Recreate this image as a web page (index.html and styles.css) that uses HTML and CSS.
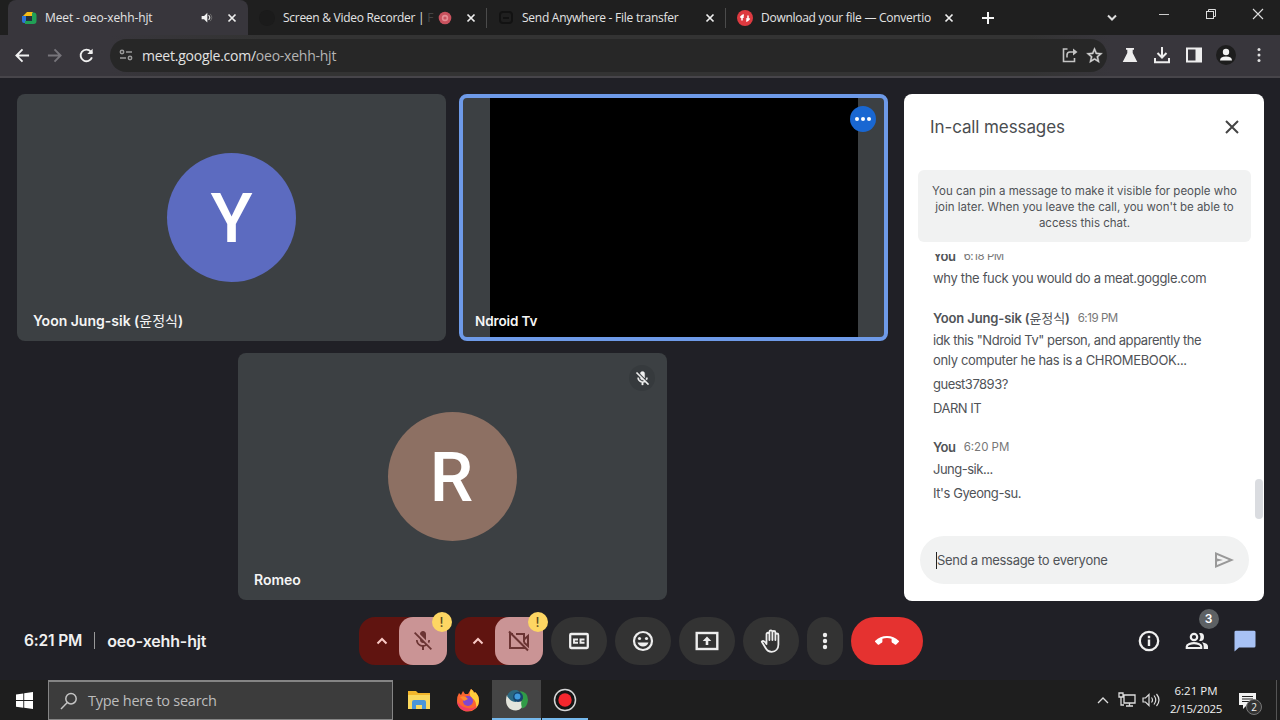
FILE: index.html
```html
<!DOCTYPE html>
<html lang="en">
<head>
<meta charset="utf-8">
<title>Meet - oeo-xehh-hjt</title>
<link rel="stylesheet" href="styles.css">
</head>
<body>
<header class="tabstrip">
  <div class="tab tab-active">
    <svg class="fav" viewBox="0 0 16 16"><path d="M2 6l4-4h6v4H2z" fill="#f6bd16"/><path d="M1 6h4v7H3a2 2 0 0 1-2-2z" fill="#2d74d8"/><path d="M11 2.500h1.500a3 3 0 0 1 3 3v5.500a3 3 0 0 1-3 3H4v-3h7z" fill="#21a056"/><path d="M5 6h6v5H5z" fill="#24303c"/></svg>
    <span class="tab-title t1">Meet - oeo-xehh-hjt</span>
    <svg class="speaker" viewBox="0 0 16 16" fill="#f2f2f2"><path d="M2 6h3l4-4v12L5 10H2z"/><path d="M10.500 5q3 3 0 6" fill="none" stroke="#ddd" stroke-width="1.500"/><path d="M12.500 3.500q4 4.500 0 9" fill="none" stroke="#777" stroke-width="1"/></svg>
    <svg class="tabx" viewBox="0 0 10 10"><path d="M1.500 1.500l7 7M8.500 1.500l-7 7"/></svg>
  </div>
  <div class="tab tab2">
    <span class="fav fav-dark"></span>
    <span class="tab-title t2">Screen &amp; Video Recorder | <i class="fade">F</i></span>
    <svg class="rec" viewBox="0 0 14 14"><circle cx="7" cy="7" r="6.300" fill="#c9525e"/><circle cx="7" cy="7" r="3.200" fill="#e58d94"/><circle cx="7" cy="7" r="1.600" fill="#c9525e"/></svg>
    <svg class="tabx" viewBox="0 0 10 10"><path d="M1.500 1.500l7 7M8.500 1.500l-7 7"/></svg>
  </div>
  <div class="tab tab3">
    <svg class="fav" viewBox="0 0 16 16" fill="none" stroke="#121212" stroke-width="2"><rect x="2" y="2" width="12" height="11" rx="3"/><path d="M5 8h6"/></svg>
    <span class="tab-title t3">Send Anywhere - File transfer</span>
    <svg class="tabx" viewBox="0 0 10 10"><path d="M1.500 1.500l7 7M8.500 1.500l-7 7"/></svg>
  </div>
  <div class="tab tab4">
    <svg class="fav" viewBox="0 0 16 16"><circle cx="8" cy="8" r="8" fill="#dd3a40"/><path d="M5 10.500V6.500q0-1.500 2-1.500M3.300 7.500L5 5.800l1.700 1.700M11 5.500v4q0 1.500-2 1.500M12.700 8.500L11 10.200 9.300 8.500" fill="none" stroke="#fff" stroke-width="1.500"/></svg>
    <span class="tab-title t4">Download your file — Convertio</span>
    <svg class="tabx" viewBox="0 0 10 10"><path d="M1.500 1.500l7 7M8.500 1.500l-7 7"/></svg>
  </div>
  <svg class="newtab" viewBox="0 0 12 12"><path d="M6 0v12M0 6h12" stroke="#f5f5f5" stroke-width="2"/></svg>
  <div class="winctl">
    <svg width="12" height="12" viewBox="0 0 12 12"><path d="M2 4.500l4 4 4-4" fill="none" stroke="#ddd" stroke-width="2"/></svg>
    <svg width="12" height="12" viewBox="0 0 12 12"><path d="M1 6.500h10" stroke="#ccc"/></svg>
    <svg width="12" height="12" viewBox="0 0 12 12" fill="none" stroke="#ddd"><rect x="1.500" y="3.500" width="7" height="7"/><path d="M3.500 3.500v-2h7v7h-2"/></svg>
    <svg width="12" height="12" viewBox="0 0 12 12"><path d="M1 1l10 10M11 1L1 11" stroke="#ddd" stroke-width="1.100"/></svg>
  </div>
</header>
<nav class="toolbar">
  <svg class="nav" viewBox="0 0 16 16"><path d="M15 8H2M8 1.500L1.500 8 8 14.500"/></svg>
  <svg class="nav nav-dim" viewBox="0 0 16 16"><path d="M1 8h13M8 1.500L14.500 8 8 14.500"/></svg>
  <svg class="nav" viewBox="0 0 16 16"><path d="M13.800 10A6.200 6.200 0 1 1 12.600 3.800L14 5.200"/><path d="M14.500.8v5.700H8.800z" fill="#f1f1f1" stroke="none"/></svg>
  <div class="omnibox">
    <svg class="site" viewBox="0 0 14 12" fill="none" stroke="#999" stroke-width="1.500"><circle cx="3" cy="3" r="1.700"/><path d="M7 3h6M1 9h6"/><circle cx="11" cy="9" r="1.700"/></svg>
    <span class="url">meet.google.com/<i class="path">oeo-xehh-hjt</i></span>
    <svg class="share" viewBox="0 0 16 16" fill="none" stroke="#c4c4c4" stroke-width="1.600"><path d="M5.500 2H1.500v12.500h11V11"/><path d="M5 10.500V8q0-3 3-3h5"/><path d="M11 1.500L15.500 5 11 8.500z" fill="#c4c4c4" stroke="none"/></svg>
    <svg class="star" viewBox="0 0 24 24" fill="#d2d2d2" stroke="#d2d2d2" stroke-width=".5"><path d="M22 9.240l-7.190-.62L12 2 9.190 8.630 2 9.240l5.460 4.730L5.820 21 12 17.270 18.180 21l-1.630-7.030L22 9.240zM12 15.400l-3.760 2.270 1-4.280-3.320-2.880 4.380-.38L12 6.100l1.710 4.040 4.380.38-3.320 2.880 1 4.280L12 15.400z"/></svg>
  </div>
  <div class="ext">
    <svg width="16" height="16" viewBox="0 0 16 16" fill="#eee"><path d="M4 1h8v1.800h-1.300V6L15.300 15H.7L5.300 6V2.800H4z"/></svg>
    <svg width="18" height="18" viewBox="0 0 18 18" fill="none" stroke="#eee" stroke-width="2"><path d="M9 1v10M4.500 7L9 11.500 13.500 7M2 12v4.200h14V12"/></svg>
    <svg width="16" height="16" viewBox="0 0 16 16"><path d="M1 1.500h14v13H1z" fill="none" stroke="#eee" stroke-width="2"/><path d="M9.500 1H15v14H9.500z" fill="#eee"/></svg>
    <svg width="20" height="20" viewBox="0 0 20 20"><circle cx="10" cy="10" r="10" fill="#1d1d1d"/><circle cx="10" cy="7" r="3.200" fill="#f3f3f3"/><path d="M4 15.500q0-4 6-4t6 4z" fill="#f3f3f3"/></svg>
    <svg width="16" height="16" viewBox="0 0 16 16" fill="#e2e2e2"><circle cx="8" cy="2.600" r="1.500"/><circle cx="8" cy="8" r="1.500"/><circle cx="8" cy="13.400" r="1.500"/></svg>
  </div>
</nav>
<main class="meet">
  <div class="stage">
    <section class="tiles">
      <div class="tile"><div class="avatar blue">Y</div><span class="name n1">Yoon Jung-sik (<i class="hangul">윤정식</i>)</span></div>
      <div class="tile speaking"><div class="video"></div><span class="name n2">Ndroid Tv</span><span class="more-dot"><b></b><b></b><b></b></span></div>
      <div class="tile"><div class="avatar brown">R</div><span class="name n3">Romeo</span>
        <span class="muted"><svg width="17" height="17" viewBox="0 0 24 24" fill="#f0f0f0" stroke="#f0f0f0" stroke-width=".6"><path d="M19 11h-1.700c0 .74-.16 1.430-.43 2.050l1.230 1.230c.56-.98.9-2.090.9-3.280zm-4.020.17c0-.06.02-.11.02-.17V5c0-1.660-1.340-3-3-3S9 3.340 9 5v.18l5.980 5.990zM4.270 3L3 4.270l6.010 6.010V11c0 1.660 1.330 3 2.990 3 .22 0 .44-.03.65-.08l1.660 1.660c-.71.33-1.500.52-2.310.52-2.760 0-5.300-2.100-5.300-5.100H5c0 3.410 2.720 6.230 6 6.720V21h2v-3.280c.91-.13 1.770-.45 2.540-.9L19.730 21 21 19.730 4.270 3z"/></svg></span></div>
    </section>
    <aside class="chat">
      <div class="chat-head"><h1>In-call messages</h1><svg width="14" height="14" viewBox="0 0 14 14"><path d="M1 1l12 12M13 1L1 13" stroke="#444" stroke-width="2"/></svg></div>
      <div class="notice"><span>You can pin a message to make it visible for people who</span><span>join later. When you leave the call, you won't be able to</span><span>access this chat.</span></div>
      <div class="log">
        <div class="group"><div class="who"><b class="w1">You</b><span class="time tight">6:18 PM</span></div><p><span class="m1">why the fuck you would do a meat.goggle.com</span></p></div>
        <div class="group"><div class="who"><b class="w2">Yoon Jung-sik (<i class="hangul">윤정식</i>)</b><span class="time tight">6:19 PM</span></div><p><span class="m2">idk this "Ndroid Tv" person, and apparently the</span><br><span class="m3">only computer he has is a CHROMEBOOK...</span></p><p><span class="m4">guest37893?</span></p><p><span class="m5">DARN IT</span></p></div>
        <div class="group last"><div class="who"><b class="w1">You</b><span class="time">6:20 PM</span></div><p><span class="m6">Jung-sik...</span></p><p><span class="m7">It's Gyeong-su.</span></p></div>
        <i class="thumb"></i>
      </div>
      <div class="compose"><i class="caret"></i><span class="ph">Send a message to everyone</span><svg width="24" height="24" viewBox="0 0 24 24" fill="#999"><path d="M3 20V4l19 8-19 8zm2-3l11.850-5L5 7v3.500l6 1.500-6 1.500V17z"/></svg></div>
    </aside>
  </div>
  <footer class="controls">
    <div class="meta"><span class="clock">6:21 PM</span><i></i><span class="code">oeo-xehh-hjt</span></div>
    <div class="buttons">
      <div class="split"><svg class="chev" viewBox="0 0 12 8"><path d="M1.500 6.500L6 2l4.500 4.500"/></svg><div class="pink"><svg width="24" height="24" viewBox="0 0 24 24" fill="#6b3433"><path d="M19 11h-1.700c0 .74-.16 1.430-.43 2.050l1.230 1.230c.56-.98.9-2.090.9-3.280zm-4.020.17c0-.06.02-.11.02-.17V5c0-1.660-1.340-3-3-3S9 3.340 9 5v.18l5.980 5.990zM4.270 3L3 4.270l6.010 6.010V11c0 1.660 1.330 3 2.990 3 .22 0 .44-.03.65-.08l1.660 1.660c-.71.33-1.500.52-2.310.52-2.760 0-5.300-2.100-5.300-5.100H5c0 3.410 2.720 6.230 6 6.720V21h2v-3.280c.91-.13 1.770-.45 2.540-.9L19.730 21 21 19.730 4.270 3z"/></svg><em>!</em></div></div>
      <div class="split"><svg class="chev" viewBox="0 0 12 8"><path d="M1.500 6.500L6 2l4.500 4.500"/></svg><div class="pink"><svg width="24" height="24" viewBox="0 0 24 24" fill="none" stroke="#6b3433" stroke-width="2"><path d="M6 5H3v14h14v-2M9 5h8v8.500M17 10.500l4-3.500v10l-4-3.500M2 2.500L21 21.500"/></svg><em>!</em></div></div>
      <div class="btn"><svg width="24" height="24" viewBox="0 0 24 24" fill="none" stroke="#eee" stroke-width="2.300"><rect x="3.200" y="5" width="17.600" height="14" rx="1"/><path d="M11 10.500H7v3.200h4M17.500 10.500h-4v3.200h4" stroke-width="1.900"/></svg></div>
      <div class="btn"><svg width="24" height="24" viewBox="0 0 24 24"><circle cx="12" cy="12" r="9" fill="none" stroke="#eee" stroke-width="2.200"/><circle cx="8.500" cy="9.500" r="1.600" fill="#eee"/><circle cx="15.500" cy="9.500" r="1.600" fill="#eee"/><path d="M6.500 13.500h11q-1.500 4-5.500 4t-5.500-4z" fill="#eee"/></svg></div>
      <div class="btn"><svg width="24" height="24" viewBox="0 0 24 24"><rect x="1.700" y="4" width="20.600" height="16" fill="none" stroke="#eee" stroke-width="2.400"/><path d="M12 7.500l4.300 4.500h-3v4h-2.600v-4h-3z" fill="#eee"/></svg></div>
      <div class="btn"><svg width="24" height="24" viewBox="0 0 24 24" fill="none" stroke="#eee" stroke-width="1.800" stroke-linejoin="round" stroke-linecap="round"><path d="M7.500 14V5.200a1.400 1.400 0 0 1 2.900 0V11M10.400 11V2.900a1.400 1.400 0 0 1 3 0V11M13.400 11V3.500a1.400 1.400 0 0 1 3 0V11M16.400 11V6a1.400 1.400 0 0 1 3 0v9.500c0 4.300-2.800 7.300-6.700 7.300-3 0-4.700-1.200-6.100-3.800L2.800 12.700c1.300-1.500 2.900-.6 4.700 2.300"/></svg></div>
      <div class="btn narrow"><svg width="24" height="24" viewBox="0 0 24 24" fill="#eee"><circle cx="12" cy="6" r="2.200"/><circle cx="12" cy="12" r="2.200"/><circle cx="12" cy="18" r="2.200"/></svg></div>
      <div class="btn end"><svg width="24" height="24" viewBox="0 0 24 24" fill="#fff"><path d="M12 9c-1.600 0-3.150.25-4.600.72v3.100c0 .39-.23.74-.56.9-.98.49-1.870 1.120-2.660 1.850-.18.18-.43.28-.7.28-.28 0-.53-.11-.71-.29L.29 13.080c-.18-.17-.29-.42-.29-.7 0-.28.11-.53.29-.71C3.340 8.780 7.460 7 12 7s8.660 1.780 11.710 4.670c.18.18.29.43.29.71 0 .28-.11.53-.29.71l-2.480 2.480c-.18.18-.43.29-.71.29-.27 0-.52-.11-.7-.28-.79-.74-1.690-1.360-2.670-1.850-.33-.16-.56-.5-.56-.9v-3.100C15.150 9.250 13.600 9 12 9z"/></svg></div>
    </div>
    <div class="side">
      <svg width="24" height="24" viewBox="0 0 24 24"><circle cx="12" cy="12" r="9.200" fill="none" stroke="#f0f0f0" stroke-width="2.300"/><path d="M10.800 10.500h2.400v6.500h-2.400zM10.800 6.800h2.400v2.400h-2.400z" fill="#f0f0f0"/></svg>
      <div class="people"><svg width="24" height="24" viewBox="0 0 24 24"><g fill="none" stroke="#f0f0f0" stroke-width="2.200"><circle cx="9" cy="8" r="3.200"/><path d="M1.800 19v-1.500c0-2 4.500-3.300 7.200-3.300s7.200 1.300 7.200 3.300V19z"/></g><path d="M14 4.300q5-1 5 3.700t-5 3.800q3-3.700 0-7.500zM17 13.200q6 1 6 4.300V20h-4.300v-2.500q0-2.500-1.700-4.300z" fill="#f0f0f0"/></svg><em>3</em></div>
      <svg width="24" height="24" viewBox="0 0 24 24"><path d="M1.500 3q0-1.300 1.500-1.300h18q1.500 0 1.500 1.300v14q0 1.500-1.500 1.500H6l-4.500 4z" fill="#a8c2f5"/></svg>
    </div>
  </footer>
</main>
<footer class="taskbar">
  <div class="start"><svg width="17" height="17" viewBox="0 0 17 17" fill="#fff"><path d="M0 2.400l7.300-1v6.700H0zM8.200 1.200L17 0v8.100H8.200zM0 9h7.300v6.700L0 14.700zM8.200 9H17v8l-8.800-1.200z"/></svg></div>
  <div class="search"><svg width="18" height="18" viewBox="0 0 18 18" fill="none" stroke="#c4c4c4" stroke-width="1.500"><circle cx="11" cy="6.700" r="5.200"/><path d="M7.300 10.500L1 17"/></svg><span>Type here to search</span></div>
  <div class="apps">
    <div class="app"><svg width="24" height="24" viewBox="0 0 24 24"><path d="M1 3h8l2 2h12v16H1z" fill="#f3b62b"/><path d="M1 7h22v14H1z" fill="#fbd95e"/><path d="M5 21v-7q0-2 2-2h10q2 0 2 2v7h-4v-4H9v4z" fill="#4b95d8"/></svg></div>
    <div class="app"><svg width="24" height="24" viewBox="0 0 24 24"><path d="M3 5l2 2 2-4 2 3h3l3-5q3 2 3 4l1-1q4 3 4 9a11 10.500 0 0 1-22 0Q1 8 3 5z" fill="#fb6430"/><path d="M15 1q3 2 3 4l1-1q4 3 4 9 0 4-3 7 1-7-4-10-4-3-1-9z" fill="#ffcd3b"/><path d="M1 13q1 8 8 9.800 8 1 12-5-5 4-11 2Q4 18 1 13z" fill="#f23d64"/><circle cx="12" cy="13" r="5" fill="#8147cf"/><path d="M4 9q5-2 8 2l-4 2q-2-2-4-4z" fill="#ff8c2d"/></svg></div>
    <div class="app app-on"><svg width="24" height="24" viewBox="0 0 24 24"><path d="M2 7q8 8 17 6-1 9-8 9.500Q1 22 1 12q0-3 1-5z" fill="#e3e5dc"/><path d="M2 8Q5 1 12 2l4 3-5 9q-5 0-9-6z" fill="#2c6880"/><path d="M15 3q8 1 8 9-.5 7-6 8.500-2-7 1-10z" fill="#319b47"/><circle cx="13" cy="9" r="5" fill="#16456f"/><circle cx="12.500" cy="8.500" r="3" fill="#3f9ade"/></svg></div>
    <div class="app app-run"><svg width="24" height="24" viewBox="0 0 24 24"><circle cx="12" cy="12" r="10.500" fill="#151515" stroke="#d5d5d5" stroke-width="1.500"/><circle cx="12" cy="12" r="6.700" fill="#f5272e"/></svg></div>
  </div>
  <div class="tray">
    <svg width="12" height="8" viewBox="0 0 12 8"><path d="M1 7l5-5 5 5" fill="none" stroke="#ddd" stroke-width="1.300"/></svg>
    <svg width="18" height="16" viewBox="0 0 18 16" fill="none" stroke="#ddd" stroke-width="1.300"><path d="M6 3h11v8H6zM11.500 11v3M8 14h7M1 1h4v4H1zM3 5v8h3"/></svg>
    <svg width="18" height="16" viewBox="0 0 18 16" fill="none" stroke="#ddd" stroke-width="1.200"><path d="M1 6h2.500L7 2.500v11L3.500 10H1zM9.500 5.500q2 2.500 0 5M12 3.500q3.500 4.500 0 9M14.500 2q5 6 0 12"/></svg>
    <div class="datetime"><span class="tt">6:21 PM</span><span class="dd">2/15/2025</span></div>
    <div class="notif"><svg width="17" height="17" viewBox="0 0 17 17"><path d="M0 1h17v12H8l-4 4v-4H0z" fill="#f2f2f2"/><path d="M3 4.500h11M3 7h11M3 9.500h7" stroke="#222" stroke-width="1"/></svg><em>2</em></div>
  </div>
  <i class="peek"></i>
</footer>
</body>
</html>
```
FILE: styles.css
```css
* { box-sizing: border-box; }
body { margin: 0; width: 1280px; height: 720px; overflow: hidden; display: flex; flex-direction: column; background: #202026; font-family: Inter, "Noto Sans CJK KR", sans-serif; }
svg { flex: none; display: block; }
i, em { font-style: normal; }
span, b { white-space: nowrap; }

.tabstrip { height: 35px; flex: none; background: #1f1f1f; display: flex; align-items: center; font-family: "Open Sans", sans-serif; font-size: 12px; color: #e4e4e4; padding-left: 8px; }
.tab { display: flex; align-items: center; height: 35px; position: relative; }
.tab-active { width: 240px; background: #38363c; border-radius: 8px 8px 0 0; padding-left: 13px; }
.tab2 { width: 239px; padding-left: 11px; border-right: 1px solid #4b4b4b; height: 20px; }
.tab3 { width: 239px; padding-left: 11px; border-right: 1px solid #4b4b4b; height: 20px; }
.tab4 { width: 240px; padding-left: 11px; }
.fav { width: 16px; height: 16px; margin-right: 8px; flex: none; }
.fav-dark { border-radius: 8px; background: #1b1b1b; }
.tab-title { line-height: 20px; }
.t1 { letter-spacing: -0.130px; }
.t2 { letter-spacing: -0.280px; }
.t3 { letter-spacing: -0.260px; }
.t4 { letter-spacing: -0.270px; }
.fade { color: #444; }
.tabx { width: 10px; height: 10px; position: absolute; right: 11px; fill: none; stroke: #eee; stroke-width: 1.700; }
.tab2 .tabx, .tab3 .tabx { right: 10px; }
.tab4 .tabx { right: 12px; }
.speaker { width: 13px; height: 13px; position: absolute; right: 35px; }
.rec { width: 14px; height: 14px; position: absolute; right: 34px; }
.newtab { width: 12px; height: 12px; margin-left: 16px; }
.winctl { margin-left: auto; display: flex; gap: 35px; padding-right: 16px; padding-bottom: 4px; }
.winctl svg:first-child { margin-top: 3px; margin-right: 5px; }

.toolbar { height: 43px; flex: none; display: flex; align-items: center; background: linear-gradient(90deg, #38363c 110px, #333 260px, #333 1030px, #38363c 1110px); border-bottom: 2px solid #47454a; padding: 0 0 1px 15px; }
.nav { width: 15px; height: 15px; margin-right: 17px; fill: none; stroke: #f1f1f1; stroke-width: 2; }
.nav-dim { stroke: #77757b; }
.omnibox { width: 997px; height: 33px; border-radius: 17px; background: #272727; display: flex; align-items: center; padding: 0 3px 0 9px; margin-left: -1px; }
.site { width: 14px; height: 12px; margin-right: 9px; }
.url { font-family: "Open Sans", sans-serif; font-size: 14px; letter-spacing: -0.240px; color: #e2e2e2; }
.path { color: #b5b5b5; }
.share { width: 16px; height: 16px; margin-left: auto; margin-right: 7px; }
.star { width: 19px; height: 19px; }
.ext { display: flex; flex: 1; align-items: center; justify-content: space-between; padding: 0 13px 0 15px; }

.meet { height: 602px; flex: none; background: #202026; }
.stage { height: 522px; padding: 16px 16px 0 17px; display: flex; justify-content: space-between; }
.tiles { width: 871px; display: flex; flex-wrap: wrap; justify-content: center; align-content: flex-start; gap: 12px 13px; }
.tile { width: 429px; height: 247px; border-radius: 8px; background: #3c4043; position: relative; display: flex; align-items: center; justify-content: center; }
.speaking { border: 4px solid #6e9ae8; }
.avatar { width: 129px; height: 129px; border-radius: 50%; color: #fff; font: 500 69px/132px Roboto, sans-serif; text-align: center; }
.blue { background: #5c6bc0; }
.brown { background: #8d7063; padding-right: 2px; }
.name { position: absolute; left: 16px; bottom: 10px; font-size: 14px; line-height: 20px; font-weight: 600; color: #f5f5f5; }
.hangul { font-weight: 400; }
.n2 { font-size: 13.500px; letter-spacing: -0.100px; }
.speaking .name { left: 12px; bottom: 6px; }
.video { width: 368px; height: 239px; background: #000; }
.more-dot { position: absolute; right: 8px; top: 8px; width: 26px; height: 26px; border-radius: 50%; background: #1967d2; display: flex; align-items: center; justify-content: center; gap: 2px; }
.more-dot b { width: 4px; height: 4px; border-radius: 50%; background: #fff; }
.muted { position: absolute; right: 12px; top: 12px; width: 26px; height: 26px; border-radius: 50%; background: #363a3d; display: flex; align-items: center; justify-content: center; }

.chat { width: 360px; height: 507px; border-radius: 8px; background: #fff; color: #505357; display: flex; flex-direction: column; }
.chat-head { height: 76px; flex: none; display: flex; justify-content: space-between; padding: 21px 25px 0 26px; }
.chat-head svg { margin-top: 5px; }
h1 { margin: 0; font-size: 17px; line-height: 24px; font-weight: 400; letter-spacing: -0.100px; color: #4a4d50; white-space: nowrap; }
.notice { width: 333px; height: 72px; margin-left: 14px; flex: none; background: #f1f2f2; border-radius: 6px; display: flex; flex-direction: column; align-items: center; padding-top: 13px; font-size: 11.500px; line-height: 16px; }
.log { margin-top: 12px; height: 265px; flex: none; overflow: hidden; position: relative; display: flex; flex-direction: column; justify-content: flex-end; gap: 20px; padding: 0 29px 16px; font-size: 13px; line-height: 20px; letter-spacing: -0.330px; }
.last { margin-top: -1px; }
.who { display: flex; align-items: center; gap: 8px; height: 20px; margin-bottom: 2px; font-size: 13px; }
.who b { font-weight: 600; }
.w1 { letter-spacing: -0.400px; }
.w2 { letter-spacing: -0.150px; }
.time { font-size: 11.500px; letter-spacing: 0; color: #777; }
.tight { letter-spacing: -0.450px; }
.m2, .m7 { letter-spacing: -0.430px; }
.m4, .m5, .m6 { letter-spacing: -0.500px; }
p { margin: 0 0 4px; white-space: nowrap; }
p:last-child { margin: 0; }
.thumb { position: absolute; right: 1px; top: 225px; width: 8px; height: 40px; border-radius: 4px; background: #dadce0; }
.compose { margin: 17px 0 0 16px; width: 329px; height: 48px; border-radius: 24px; background: #f1f2f2; display: flex; align-items: center; padding: 0 13px 0 16px; font-size: 13px; letter-spacing: -0.290px; }
.caret { width: 1px; height: 17px; background: #222; }
.ph { padding-bottom: 1px; }
.compose svg { margin-left: auto; }

.controls { height: 80px; display: grid; grid-template-columns: 358.500px 564px 1fr; padding-top: 16.500px; }
.controls > div { height: 48px; align-items: center; display: flex; }
.meta { padding-left: 24px; font-size: 15.500px; letter-spacing: -0.150px; font-weight: 600; color: #f0f0f0; }
.code { font-size: 16px; }
.meta i { width: 1px; height: 17px; background: #999; margin: 0 12px 0 12px; }
.buttons { gap: 8px; }
.split { width: 88px; height: 48px; border-radius: 16px; background: #601410; display: flex; align-items: center; }
.chev { width: 12px; height: 8px; margin: 0 11px 0 17px; fill: none; stroke: #f9c9c5; stroke-width: 2; }
.pink { width: 48px; height: 48px; border-radius: 14px; background: #ca9495; position: relative; display: flex; align-items: center; justify-content: center; }
.pink em { position: absolute; right: -5px; top: -5px; width: 20px; height: 20px; border-radius: 50%; background: #fdd663; color: #5a4a1c; font-size: 13px; line-height: 20px; text-align: center; font-weight: 500; }
.btn { width: 56px; height: 48px; border-radius: 24px; background: #333333; display: flex; align-items: center; justify-content: center; }
.narrow { width: 36px; border-radius: 18px; }
.end { width: 72px; background: #e53230; }
.side { justify-content: flex-end; gap: 24px; padding-right: 23.500px; }
.people { position: relative; }
.people em { position: absolute; left: 14px; top: -20px; width: 20px; height: 20px; border-radius: 50%; background: #5d6164; color: #fff; font-size: 12px; line-height: 20px; text-align: center; font-weight: 600; }

.taskbar { height: 40px; flex: none; background: #1e1e1e; display: flex; font-family: "Open Sans", sans-serif; color: #f0f0f0; }
.start { width: 48px; display: flex; align-items: center; justify-content: center; }
.search { width: 345px; background: #3c3c3c; border: 1px solid #858585; border-width: 2px 1px 1px; display: flex; align-items: center; padding-left: 11px; gap: 10px; font-size: 14.500px; letter-spacing: -0.250px; color: #bdbdbd; }
.apps { display: flex; margin-left: 2px; }
.app { width: 48.700px; display: flex; align-items: center; justify-content: center; border-bottom: 2px solid transparent; }
.app svg { margin-top: 2px; }
.app-on { background: #454545; border-color: #76b9ed; }
.app-run { border-image: linear-gradient(90deg, transparent 3px, #76b9ed 3px, #76b9ed 45px, transparent 45px) 2; border-width: 0 0 2px; }
.tray { margin-left: auto; display: flex; align-items: center; }
.tray svg + svg { margin-left: 9px; }
.tray svg:nth-child(3) { margin-left: 6px; }
.datetime { width: 72px; margin-right: 7px; display: flex; flex-direction: column; align-items: center; font-size: 11.500px; line-height: 18px; }
.dd { letter-spacing: -0.250px; }
.notif { position: relative; }
.notif em { position: absolute; left: 7px; top: 7px; width: 16px; height: 16px; border-radius: 50%; background: #333; border: 1px solid #777; font-size: 10px; line-height: 14px; text-align: center; }
.peek { width: 1px; background: #555; margin-left: 20px; margin-right: 3px; }
```
